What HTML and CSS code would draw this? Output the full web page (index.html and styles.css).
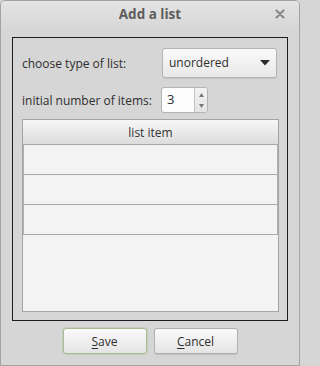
FILE: index.html
```html
<!DOCTYPE html>
<html>
<head>
<meta charset="utf-8">
<link rel="stylesheet" href="styles.css">
</head>
<body>
<div class="window">
  <div class="titlebar">
    <span class="title">Add a list</span>
    <span class="close">
      <svg width="10" height="10" viewBox="0 0 10 10"><path d="M1.5 1.5 L8.5 8.5 M8.5 1.5 L1.5 8.5" stroke="#8a8a8a" stroke-width="2.2" stroke-linecap="round"/></svg>
    </span>
  </div>
  <div class="content">
    <div class="frame">
      <div class="row row-type">
        <span class="label">choose type of list:</span>
        <div class="combo">
          <span class="combo-text">unordered</span>
          <svg class="combo-arrow" width="10" height="6" viewBox="0 0 10 6"><path d="M0 0 H10 L5 5.5 Z" fill="#2a2a2a"/></svg>
        </div>
      </div>
      <div class="row row-count">
        <span class="label">initial number of items:</span>
        <div class="spin">
          <span class="spin-text">3</span>
          <div class="spin-buttons">
            <svg width="5" height="4" viewBox="0 0 5 4"><path d="M0 4 L2.5 0 L5 4 Z" fill="#777"/></svg>
            <svg width="5" height="4" viewBox="0 0 5 4"><path d="M0 0 L2.5 4 L5 0 Z" fill="#777"/></svg>
          </div>
        </div>
      </div>
      <div class="table">
        <div class="thead">list item</div>
        <div class="trow"></div>
        <div class="trow"></div>
        <div class="trow"></div>
      </div>
    </div>
    <div class="buttons">
      <button class="btn btn-default"><u>S</u>ave</button>
      <button class="btn"><u>C</u>ancel</button>
    </div>
  </div>
</div>
</body>
</html>
```

FILE: styles.css
```css
html, body {
  margin: 0;
  padding: 0;
  background: #d6d6d6;
}
body {
  font-family: "Open Sans", "DejaVu Sans", sans-serif;
  font-size: 12px;
  color: #2e2e2e;
}
.window {
  width: 300px;
  height: 366px;
  box-sizing: border-box;
  border: 1px solid #a3a3a3;
  border-radius: 5px 5px 0 0;
  background: #d6d6d6;
  display: flex;
  flex-direction: column;
  overflow: hidden;
}
.titlebar {
  height: 26px;
  flex: none;
  position: relative;
  display: flex;
  align-items: center;
  justify-content: center;
  background: linear-gradient(#e4e4e4, #d8d8d8);
}
.title {
  font-weight: bold;
  font-size: 13.5px;
  color: #5c5c5c;
  margin-top: -1px;
}
.close {
  position: absolute;
  right: 14px;
  top: 8px;
  display: flex;
}
.content {
  flex: 1;
  display: flex;
  flex-direction: column;
  padding: 10px 11px 11px 11px;
}
.frame {
  flex: 1;
  border: 1px solid #1c1c1c;
  padding: 10px 8px 8px 9px;
  display: flex;
  flex-direction: column;
}
.row {
  display: flex;
  align-items: center;
  flex: none;
}
.label {
  width: 139px;
  flex: none;
  white-space: nowrap;
}
.row-type {
  height: 30px;
  margin-bottom: 9px;
}
.row-count {
  height: 26px;
  margin-bottom: 6px;
}
.combo {
  margin-left: 1px;
  width: 115px;
  height: 30px;
  box-sizing: border-box;
  border: 1px solid #b4b4b4;
  border-radius: 3px;
  background: linear-gradient(#fafafa, #e8e8e8);
  box-shadow: 0 1px 0 rgba(0,0,0,0.08);
  display: flex;
  align-items: center;
  padding: 0 5px 0 6px;
}
.combo-text {
  flex: 1;
  margin-top: -1px;
}
.combo-arrow {
  margin-right: 1px;
}
.spin {
  width: 47px;
  height: 26px;
  box-sizing: border-box;
  border: 1px solid #b4b4b4;
  border-radius: 3px;
  background: #fdfdfd;
  display: flex;
  overflow: hidden;
}
.spin-text {
  flex: 1;
  padding-left: 5px;
  line-height: 23px;
  font-size: 13px;
}
.spin-buttons {
  width: 12px;
  border-left: 1px solid #c4c4c4;
  background: linear-gradient(#f2f2f2, #e4e4e4);
  display: flex;
  flex-direction: column;
  align-items: center;
  justify-content: space-between;
  padding: 5px 0 4px;
}
.table {
  flex: 1;
  border: 1px solid #a4a4a4;
  background: #f3f3f3;
  display: flex;
  flex-direction: column;
}
.thead {
  height: 24px;
  flex: none;
  border-bottom: 1px solid #a8a8a8;
  background: linear-gradient(#f7f7f7, #dcdcdc);
  display: flex;
  align-items: center;
  justify-content: center;
  color: #333;
}
.trow {
  height: 29px;
  flex: none;
  border-bottom: 1px solid #a8a8a8;
  border-left: 1px solid #b0b0b0;
  border-right: 1px solid #b0b0b0;
  background: #f3f3f3;
}
.buttons {
  flex: none;
  display: flex;
  justify-content: center;
  gap: 7px;
  margin-top: 7px;
}
.btn {
  width: 84px;
  height: 26px;
  box-sizing: border-box;
  border: 1px solid #b0b0b0;
  border-radius: 3px;
  background: linear-gradient(#fafafa, #e4e4e4);
  font-family: "Open Sans", "DejaVu Sans", sans-serif;
  font-size: 12px;
  color: #2e2e2e;
  padding: 0;
  box-shadow: 0 1px 0 rgba(0,0,0,0.1);
}
.btn u {
  text-underline-offset: 2px;
}
.btn-default {
  border-color: #a9bb95;
  box-shadow: 0 0 0 1px rgba(170,190,150,0.35);
}
```
